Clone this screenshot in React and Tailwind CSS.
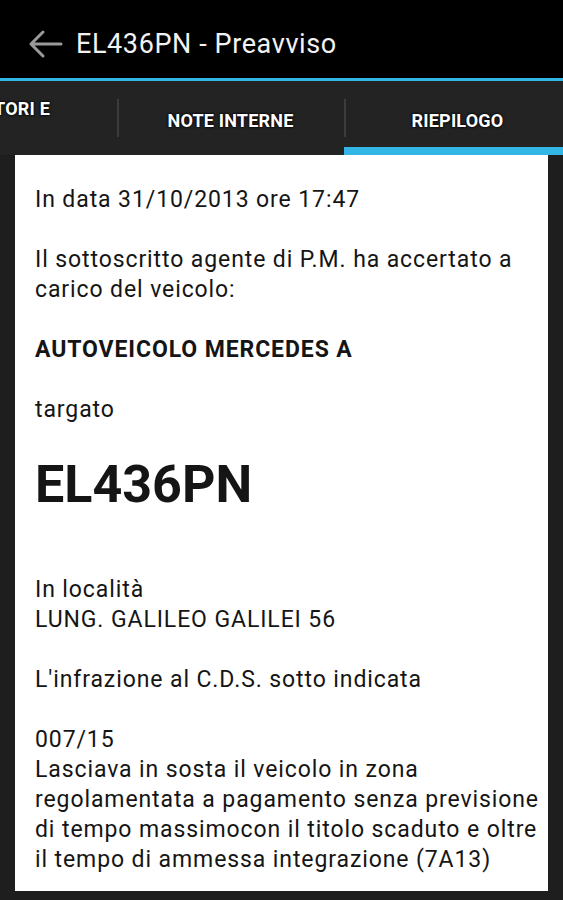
const lines = [
  { text: 'In data 31/10/2013 ore 17:47' },
  { text: '' },
  { text: 'Il sottoscritto agente di P.M. ha accertato a' },
  { text: 'carico del veicolo:' },
  { text: '' },
  { text: 'AUTOVEICOLO MERCEDES A', bold: true },
  { text: '' },
  { text: 'targato' },
  { text: '' },
];

const lines2 = [
  { text: '' },
  { text: '' },
  { text: 'In località' },
  { text: 'LUNG. GALILEO GALILEI 56' },
  { text: '' },
  { text: "L'infrazione al C.D.S. sotto indicata" },
  { text: '' },
  { text: '007/15' },
  { text: 'Lasciava in sosta il veicolo in zona' },
  { text: 'regolamentata a pagamento senza previsione' },
  { text: 'di tempo massimocon il titolo scaduto e oltre' },
  { text: 'il tempo di ammessa integrazione (7A13)' },
];

function Line({ text, bold }) {
  return (
    <div className={`h-[30px] whitespace-nowrap leading-[30px] ${bold ? 'font-bold' : ''}`}>
      {text || '\u00a0'}
    </div>
  );
}

function App() {
  return (
    <div
      className="flex h-[900px] w-[563px] flex-col overflow-hidden bg-[#1e1e1e]"
      style={{ fontFamily: 'Roboto, "Noto Sans", sans-serif' }}
    >
      {/* action bar */}
      <header className="flex h-[78px] shrink-0 items-center bg-black pt-[10px]">
        <svg width="36" height="30" viewBox="0 0 36 30" className="ml-[27px]" fill="none">
          <path d="M34 15H4M16 3L4 15l12 12" stroke="#9a9a9a" strokeWidth="3" strokeLinecap="round" strokeLinejoin="round" />
        </svg>
        <h1 className="ml-[13px] text-[27px] leading-none tracking-[0.6px] text-[#f2f2f2]">EL436PN - Preavviso</h1>
      </header>
      <div className="h-[3px] shrink-0 bg-[#33b5e5]" />

      {/* tabs */}
      <nav className="flex h-[74px] shrink-0 bg-[#232323] text-[18px] font-bold tracking-[0.2px] text-white [text-shadow:0_0_3px_#000,0_0_2px_#000]">
        <div className="flex w-[117px] shrink-0 justify-end pr-[67px] pt-[17px]">
          <span className="whitespace-nowrap leading-[22px]">TORI E</span>
        </div>
        <div className="relative flex w-[227px] shrink-0 items-center justify-center pt-[4px]">
          <div className="absolute left-0 top-[18px] h-[38px] w-[2px] bg-[#3c3c3c]" />
          <span className="whitespace-nowrap">NOTE INTERNE</span>
        </div>
        <div className="relative flex w-[227px] shrink-0 items-center justify-center pt-[4px]">
          <div className="absolute left-0 top-[18px] h-[38px] w-[2px] bg-[#3c3c3c]" />
          <span className="whitespace-nowrap">RIEPILOGO</span>
          <div className="absolute bottom-0 left-0 h-[8px] w-full bg-[#33b5e5]" />
        </div>
      </nav>

      {/* summary card */}
      <main className="mx-[15px] h-[736px] shrink-0 overflow-hidden bg-white px-[20px] pt-[30px] text-[23px] tracking-[0.9px] text-[#151515]">
        {lines.map((l, i) => (
          <Line key={`a${i}`} {...l} />
        ))}
        <div className="h-[60px] text-[52px] font-bold leading-[60px] tracking-normal">EL436PN</div>
        {lines2.map((l, i) => (
          <Line key={`b${i}`} {...l} />
        ))}
      </main>
    </div>
  );
}

export default App;
